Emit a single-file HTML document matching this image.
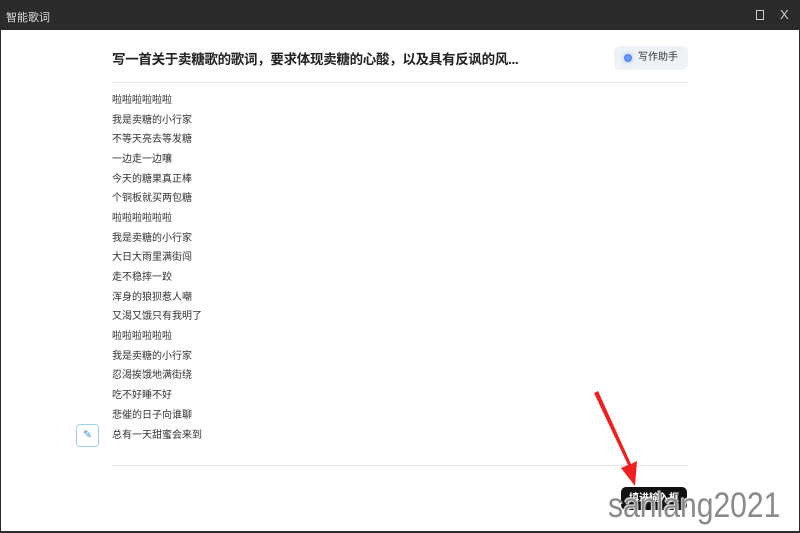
<!DOCTYPE html>
<html><head><meta charset="utf-8"><style>
*{margin:0;padding:0;box-sizing:border-box}
body{width:800px;height:533px;overflow:hidden;background:#fff;font-family:"Liberation Sans","Noto Sans CJK SC",sans-serif;position:relative}
.tb{position:absolute;left:0;top:0;width:800px;height:30px;background:#2b2b2b;color:#ddd;font-size:11px}
.frame{position:absolute;left:0;top:30px;width:800px;height:503px;border:1px solid #2b2b2b;border-top:none;border-bottom:2px solid #2b2b2b}
.t{position:absolute;left:112px;top:48px;font-size:13.5px;font-weight:bold;color:#222;letter-spacing:-0.3px}
.hr{position:absolute;left:112px;width:576px;height:1px;background:#e8e8e8}
.l{position:absolute;left:112px;font-size:10px;color:#333;line-height:12px}
</style></head><body>
<div class="tb"><span style="position:absolute;left:6px;top:9px">智能歌词</span>
<div style="position:absolute;left:756px;top:10px;width:8px;height:10px;border:1px solid #ccc"></div>
<span style="position:absolute;left:780px;top:7px;font-size:13px;color:#ccc">X</span></div>
<div class="frame"></div>
<div class="t">写一首关于卖糖歌的歌词，要求体现卖糖的心酸，以及具有反讽的风...</div>
<div style="position:absolute;left:614px;top:46px;width:74px;height:24px;background:#eef2f6;border-radius:6px;font-size:10px;color:#333;line-height:24px;padding-left:24px">写作助手
<div style="position:absolute;left:10px;top:8px;width:8px;height:8px;border-radius:50%;background:radial-gradient(circle,#6ab0ff,#5a5cf0);box-shadow:0 0 4px #8cf"></div></div>
<div class="hr" style="top:82px"></div>
<div class="hr" style="top:465px"></div>
<div class="l" style="top:95px">啦啦啦啦啦啦</div>
<div class="l" style="top:115px">我是卖糖的小行家</div>
<div class="l" style="top:134px">不等天亮去等发糖</div>
<div class="l" style="top:154px">一边走一边嚷</div>
<div class="l" style="top:174px">今天的糖果真正棒</div>
<div class="l" style="top:193px">个铜板就买两包糖</div>
<div class="l" style="top:213px">啦啦啦啦啦啦</div>
<div class="l" style="top:233px">我是卖糖的小行家</div>
<div class="l" style="top:252px">大日大雨里满街闯</div>
<div class="l" style="top:272px">走不稳摔一跤</div>
<div class="l" style="top:292px">浑身的狼狈惹人嘲</div>
<div class="l" style="top:311px">又渴又饿只有我明了</div>
<div class="l" style="top:331px">啦啦啦啦啦啦</div>
<div class="l" style="top:351px">我是卖糖的小行家</div>
<div class="l" style="top:370px">忍渴挨饿地满街绕</div>
<div class="l" style="top:390px">吃不好睡不好</div>
<div class="l" style="top:410px">悲催的日子向谁聊</div>
<div class="l" style="top:430px">总有一天甜蜜会来到</div>
<div style="position:absolute;left:76px;top:424px;width:23px;height:23px;border:1px solid #9cd3f0;border-radius:4px;color:#3a8fd8;font-size:11px;text-align:center;line-height:21px">✎</div>
<div style="position:absolute;left:621px;top:487px;width:66px;height:23px;background:#111;border-radius:5px;color:#fff;font-size:10px;font-weight:bold;text-align:center;line-height:23px">填进输入框</div>
<svg style="position:absolute;left:590px;top:390px" width="60" height="100"><polygon points="4,3 38,75 31,78 45,96 47,71 41,74 8,1" fill="#f02020"/></svg>
<div style="position:absolute;left:608px;top:486px;font-size:35px;color:#8a8a8a;text-shadow:1px 1px 1px #fff,-1px -1px 1px #fff;font-family:'Liberation Sans',sans-serif;transform:scaleX(0.86);transform-origin:left top;white-space:nowrap">sanlang2021</div>
</body></html>
